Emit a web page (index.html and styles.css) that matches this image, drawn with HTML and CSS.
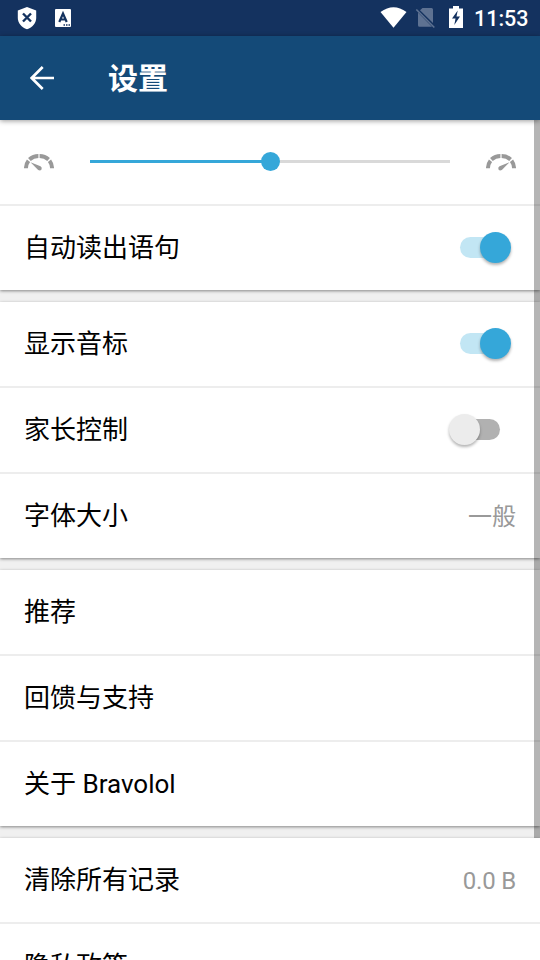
FILE: index.html
```html
<!DOCTYPE html>
<html lang="zh-CN">
<head>
<meta charset="utf-8">
<title>设置</title>
<link rel="stylesheet" href="styles.css">
</head>
<body>
<div class="screen">
  <header class="status">
    <svg class="status-left" width="90" height="36" viewBox="0 0 90 36">
      <path fill="#fff" d="M27 7 36.2 10.6V18c0 5-3.7 9.4-9.2 11.2C21.500 27.400 17.800 23 17.800 18v-7.400z"/>
      <path d="m23 13.500 8 8m0-8-8 8" stroke="#14325f" stroke-width="2.400"/>
      <rect x="55" y="9" width="16" height="18" rx="1" fill="#fff"/>
      <path d="m59.300 22 3.700-8.500 3.700 8.500M60.600 19.500h4.800" fill="none" stroke="#14325f" stroke-width="2.200"/>
      <path d="M63.500 25h1.500m1 0h1.500m1 0H70" stroke="#14325f" stroke-width="1.500"/>
    </svg>
    <svg class="status-right" width="90" height="36" viewBox="380 0 90 36">
      <path fill="#fff" d="M380.500 12Q393.500 2.500 406.500 12L393.500 27.700z"/>
      <path fill="#5e7292" d="M422.500 8H431.500Q433 8 433 9.500V23L420 10.200zM418 12.500 432 26.800H419.500Q418 26.800 418 25.300z"/>
      <path d="m416.300 9.500 18 18" stroke="#5e7292" stroke-width="1.600"/>
      <path fill="#fff" d="M449 8.500h4V6h6v2.500h4V28h-14z"/>
      <path fill="#14325f" d="m457.700 10.500-5.700 8h3.500l-1.200 6.500 5.700-8.500h-3.500z"/>
    </svg>
    <span class="clock">11:53</span>
  </header>
  <div class="appbar">
    <svg width="24" height="24" viewBox="0 0 24 24"><path d="M24 12H2M12.700 1 1.700 12l11 11" fill="none" stroke="#fff" stroke-width="2.700"/></svg>
    <h1>设置</h1>
  </div>
  <main class="list">
    <section class="card">
      <div class="row">
        <svg class="gauge" width="30" height="20" viewBox="0 0 30 20">
          <path class="arc" d="M2 16.200A13 12.200 0 0 1 4.500 8.700M5.400 7.400A13 12.200 0 0 1 14.400 4M15.600 4A13 12.200 0 0 1 24.600 7.400M25.500 8.700A13 12.200 0 0 1 28 16.200"/>
          <path class="needle" d="m6.500 10.300 10 3.900q2 1.400 1 3.200-1.200 1.600-3.300.600z"/>
        </svg>
        <div class="slider"><div class="fill"></div><div class="knob"></div></div>
        <svg class="gauge" width="30" height="20" viewBox="0 0 30 20">
          <path class="arc" d="M2 16.200A13 12.200 0 0 1 4.500 8.700M5.400 7.400A13 12.200 0 0 1 14.400 4M15.600 4A13 12.200 0 0 1 24.600 7.400M25.500 8.700A13 12.200 0 0 1 28 16.200"/>
          <path class="needle" d="m23.500 10.300-10 3.900q-2 1.400-1 3.200 1.200 1.600 3.300.600z"/>
        </svg>
      </div>
      <div class="row"><span class="label">自动读出语句</span><div class="switch on"><div class="thumb"></div></div></div>
    </section>
    <section class="card">
      <div class="row"><span class="label">显示音标</span><div class="switch on"><div class="thumb"></div></div></div>
      <div class="row"><span class="label">家长控制</span><div class="switch off"><div class="thumb"></div></div></div>
      <div class="row"><span class="label">字体大小</span><span class="value">一般</span></div>
    </section>
    <section class="card">
      <div class="row"><span class="label">推荐</span></div>
      <div class="row"><span class="label">回馈与支持</span></div>
      <div class="row"><span class="label">关于 Bravolol</span></div>
    </section>
    <section class="card">
      <div class="row"><span class="label">清除所有记录</span><span class="value size">0.0 B</span></div>
      <div class="row"><span class="label">隐私政策</span></div>
    </section>
    <div class="scrollbar"></div>
  </main>
</div>
</body>
</html>
```
FILE: styles.css
```css
* { box-sizing: border-box; }
body { margin: 0; font-family: Roboto, "Noto Sans CJK SC", sans-serif; }
.screen {
  width: 540px;
  height: 960px;
  overflow: hidden;
  display: flex;
  flex-direction: column;
  background: #f0f0f0;
}
.status {
  flex: none;
  height: 36px;
  display: flex;
  align-items: center;
  background: #14325f;
  color: #fff;
}
.status-right { margin-left: auto; }
.clock { width: 70px; padding-left: 4px; font-size: 21.500px; font-weight: 500; line-height: 36px; padding-top: 2px; white-space: nowrap; }
.appbar {
  flex: none;
  height: 84px;
  display: flex;
  align-items: center;
  gap: 54px;
  padding-left: 30px;
  background: #144a78;
  color: #fff;
  position: relative;
  z-index: 2;
  box-shadow: 0 1px 5px rgba(0, 0, 0, .4);
}
h1 { margin: 0; padding-top: 2px; font-size: 30px; font-weight: 700; line-height: 44px; }
.list {
  flex: 1;
  min-height: 0;
  position: relative;
  display: flex;
  flex-direction: column;
  gap: 12px;
}
.card { flex: none; background: #fff; box-shadow: 0 1px 3px rgba(0, 0, 0, .45); }
.row {
  height: 84px;
  display: flex;
  align-items: center;
  justify-content: space-between;
  padding: 0 24px;
}
.row + .row { height: 86px; border-top: 2px solid #ededed; }
.label { font-size: 26px; line-height: 38px; color: #000; }
.value { font-size: 24px; line-height: 36px; color: #999; padding-top: 2px; }
.size { letter-spacing: -.2px; }
.gauge { flex: none; }
.arc { fill: none; stroke: #999; stroke-width: 4; }
.needle { fill: #999; }
.slider { position: relative; width: 360px; height: 3px; margin-bottom: 1px; background: #d9d9d9; }
.fill { width: 50%; height: 3px; background: #35a7d9; }
.knob {
  position: absolute;
  left: 171px;
  top: -8px;
  width: 19px;
  height: 19px;
  border-radius: 50%;
  background: #35a7d9;
}
.switch { position: relative; width: 40px; height: 21px; border-radius: 11px; margin: 0 16px 1px 0; }
.switch.on { background: #c2e6f4; }
.switch.off { background: #b1b1b1; }
.thumb {
  position: absolute;
  top: -5px;
  width: 31px;
  height: 31px;
  border-radius: 50%;
  box-shadow: 0 2px 3px rgba(0, 0, 0, .3);
}
.on .thumb { left: 20px; background: #35a7d9; }
.off .thumb { left: -11px; background: #ececec; }
.scrollbar {
  position: absolute;
  top: 0;
  right: 0;
  width: 6px;
  height: 718px;
  background: rgba(0, 0, 0, .29);
}
```
